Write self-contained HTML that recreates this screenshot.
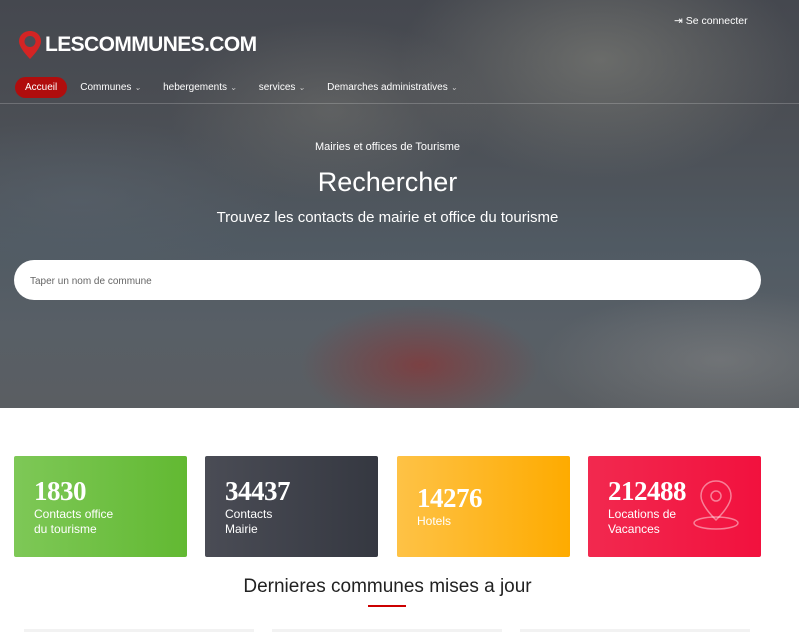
<!DOCTYPE html>
<html><head><meta charset="utf-8"><style>
*{margin:0;padding:0;box-sizing:border-box}
body{width:799px;height:632px;overflow:hidden;background:#fff;font-family:"Liberation Sans",Arial,sans-serif;position:relative}
.hero{position:absolute;left:0;top:0;width:799px;height:408px;overflow:hidden;
background:
radial-gradient(ellipse 120px 60px at 420px 365px,rgba(150,40,40,.55),transparent),
radial-gradient(ellipse 200px 120px at 600px 60px,rgba(140,140,130,.5),transparent),
radial-gradient(ellipse 160px 90px at 330px 110px,rgba(120,120,115,.45),transparent),
radial-gradient(ellipse 200px 80px at 80px 200px,rgba(90,100,110,.5),transparent),
radial-gradient(ellipse 180px 70px at 720px 360px,rgba(140,140,140,.45),transparent),
linear-gradient(180deg,#45484f 0%,#4a4d53 25%,#4e545b 45%,#505a63 60%,#585f66 80%,#5a5e62 100%);}
.logo{position:absolute;left:17px;top:30px;display:flex;align-items:center;color:#fff;font-weight:bold;font-size:21px;letter-spacing:-0.6px}
.nav{position:absolute;top:77px;left:15px;display:flex;align-items:center;font-size:10px;color:#fff}
.nav span{margin-right:22px}
.nav .act{background:#b00d0d;border-radius:11px;padding:5px 10px;margin-right:13px}
.car{font-size:8px;color:#ccc;margin-left:3px}
.line{position:absolute;top:103px;left:0;width:799px;height:1px;background:rgba(255,255,255,.2)}
.login{position:absolute;top:15px;left:674px;color:#fff;font-size:10.5px}
.c{position:absolute;left:0;width:775px;text-align:center;color:#fff}
.search{position:absolute;left:14px;top:260px;width:747px;height:40px;background:#fff;border-radius:20px;font-size:10px;color:#666;padding:15px 16px}
.card{position:absolute;top:456px;width:173px;height:101px;border-radius:2px;color:#fff}
.card b{position:absolute;left:20px;font-family:"Liberation Serif",serif;font-size:27px;letter-spacing:-0.5px}
.card p{position:absolute;left:20px;font-size:12px;line-height:15px}
h2{position:absolute;top:576px;left:0;width:775px;text-align:center;font-weight:normal;font-size:19px;color:#222}
.red{position:absolute;left:368px;top:605px;width:38px;height:2px;background:#c00}
.sh{position:absolute;top:629px;height:3px;width:230px;background:#f2f2f2}
</style></head><body>
<div class="hero">
<div class="logo"><svg width="26" height="30" viewBox="0 0 26 30"><path d="M13 1C6.5 1 2 5.5 2 11.5 2 18 13 29 13 29S24 18 24 11.5C24 5.5 19.5 1 13 1z" fill="#d42424"/><circle cx="13" cy="11.5" r="5.5" fill="#4a4d55"/></svg><span style="margin-left:2px">LESCOMMUNES.COM</span></div>
<div class="login">⇥ Se connecter</div>
<div class="nav"><span class="act">Accueil</span><span>Communes<i class="car">⌄</i></span><span>hebergements<i class="car">⌄</i></span><span>services<i class="car">⌄</i></span><span>Demarches administratives<i class="car">⌄</i></span></div>
<div class="line"></div>
<div class="c" style="top:141px;font-size:11px">Mairies et offices de Tourisme</div>
<div class="c" style="top:167px;font-size:27px">Rechercher</div>
<div class="c" style="top:209px;font-size:15px">Trouvez les contacts de mairie et office du tourisme</div>
<div class="search" style="padding-top:16px">Taper un nom de commune</div>
</div>
<div class="card" style="left:14px;background:linear-gradient(90deg,#7ec857,#62b932)"><b style="top:20px">1830</b><p style="top:51px">Contacts office<br>du tourisme</p></div>
<div class="card" style="left:205px;background:linear-gradient(90deg,#4a4c55,#353841)"><b style="top:20px">34437</b><p style="top:51px">Contacts<br>Mairie</p></div>
<div class="card" style="left:397px;background:linear-gradient(90deg,#fec246,#feab00)"><b style="top:27px">14276</b><p style="top:58px">Hotels</p></div>
<div class="card" style="left:588px;background:linear-gradient(90deg,#f2294f,#f2113e)"><b style="top:20px">212488</b><p style="top:51px">Locations de<br>Vacances</p>
<svg style="position:absolute;left:104px;top:23px" width="48" height="54" viewBox="0 0 48 54" fill="none" stroke="rgba(255,255,255,.45)" stroke-width="1.5"><path d="M24 2C15 2 9 9 9 17c0 10 15 24 15 24s15-14 15-24C39 9 33 2 24 2z"/><circle cx="24" cy="17" r="5"/><ellipse cx="24" cy="44" rx="22" ry="6"/></svg></div>
<h2>Dernieres communes mises a jour</h2>
<div class="red"></div>
<div class="sh" style="left:24px"></div><div class="sh" style="left:272px"></div><div class="sh" style="left:520px"></div>
</body></html>
